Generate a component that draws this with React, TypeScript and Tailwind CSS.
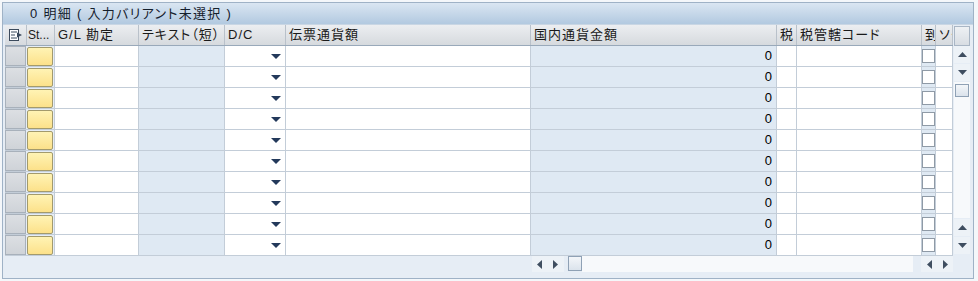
import React from 'react';

type Col = { key: string; label: string; w: string; tint?: boolean; kind?: 'sel' | 'btn' | 'dd' | 'num' | 'chk' };

const cols: Col[] = [
  { key: 'sel', label: '', w: 'w-[22px]', kind: 'sel' },
  { key: 'st', label: 'St...', w: 'w-[28px]', kind: 'btn' },
  { key: 'gl', label: 'G/L 勘定', w: 'w-[84px]' },
  { key: 'txt', label: 'テキスト（短）', w: 'w-[86px]', tint: true },
  { key: 'dc', label: 'D/C', w: 'w-[61px]', kind: 'dd' },
  { key: 'doc', label: '伝票通貨額', w: 'w-[245px]' },
  { key: 'loc', label: '国内通貨金額', w: 'w-[246px]', tint: true, kind: 'num' },
  { key: 'tax', label: '税', w: 'w-[20px]' },
  { key: 'jur', label: '税管轄コード', w: 'w-[125px]' },
  { key: 'chk', label: '到', w: 'w-[14px]', tint: true, kind: 'chk' },
  { key: 'so', label: 'ソー', w: 'w-[17px]' },
];

const rows = Array.from({ length: 10 }, (_, i) => i);

function SelIcon() {
  return (
    <svg width="14" height="12" viewBox="0 0 14 12">
      <rect x="0.5" y="0.5" width="9" height="11" fill="#fff" stroke="#3b4a5c" />
      <line x1="2" y1="3" x2="8" y2="3" stroke="#3b4a5c" />
      <line x1="2" y1="6" x2="6" y2="6" stroke="#3b4a5c" />
      <line x1="2" y1="9" x2="8" y2="9" stroke="#3b4a5c" />
      <path d="M8 3.5 L13 6 L8 8.5 Z" fill="#3b4a5c" />
    </svg>
  );
}

function Tri({ dir }: { dir: 'up' | 'down' | 'left' | 'right' }) {
  const d = {
    up: 'M0 5 L4.5 0 L9 5 Z',
    down: 'M0 0 L9 0 L4.5 5 Z',
    left: 'M5 0 L5 9 L0 4.5 Z',
    right: 'M0 0 L5 4.5 L0 9 Z',
  }[dir];
  const vert = dir === 'up' || dir === 'down';
  return (
    <svg width={vert ? 9 : 5} height={vert ? 5 : 9} viewBox={vert ? '0 0 9 5' : '0 0 5 9'}>
      <path d={d} fill="#3f4e60" />
    </svg>
  );
}

function HBtn({ dir }: { dir: 'left' | 'right' }) {
  return (
    <div className="flex items-center justify-center bg-[#edf2f7] h-[16px] w-[16px]">
      <Tri dir={dir} />
    </div>
  );
}

function VBtn({ dir }: { dir: 'up' | 'down' }) {
  return (
    <div className="flex items-center justify-center bg-[#edf2f7] h-[17px] w-[16px] mb-[1px]">
      <Tri dir={dir} />
    </div>
  );
}

function Cell({ c }: { c: Col }) {
  const base = `${c.w} shrink-0 h-full border-r border-[#c3cdd8] flex items-center`;
  if (c.kind === 'sel') {
    return (
      <div className={`${c.w} shrink-0 h-full pr-[1px] flex`}>
        <div className="w-full h-full bg-gradient-to-b from-[#dcdfe3] to-[#cfd3d8] border border-[#a8b1bb]" />
      </div>
    );
  }
  if (c.kind === 'btn') {
    return (
      <div className={`${c.w} shrink-0 h-full flex items-center pr-[1px] border-r border-[#c3cdd8]`}>
        <div className="w-full h-[19px] rounded-[2px] border border-[#a39a6c] bg-gradient-to-b from-[#fff3b4] to-[#fce18a]" />
      </div>
    );
  }
  if (c.kind === 'dd') {
    return (
      <div className={`${base} bg-white justify-end pr-[4px]`}>
        <svg width="10" height="5" viewBox="0 0 10 5">
          <path d="M0 0 L10 0 L5 5 Z" fill="#23395b" />
        </svg>
      </div>
    );
  }
  if (c.kind === 'num') {
    return <div className={`${base} bg-[#dfe9f3] justify-end pr-[4px] text-[13px] text-black`}>0</div>;
  }
  if (c.kind === 'chk') {
    return (
      <div className={`${base} bg-[#dfe9f3] justify-start`}>
        <div className="w-[13px] h-[14px] bg-white border border-[#8f9aa6]" />
      </div>
    );
  }
  return <div className={`${base} ${c.tint ? 'bg-[#dfe9f3]' : 'bg-white'}`} />;
}

export default function App() {
  return (
    <div
      className="w-[978px] h-[281px] bg-[#f4f7fa] pt-[2px] pl-[2px] text-black"
      style={{ fontFamily: '"Liberation Sans", "Noto Sans CJK JP", sans-serif', fontFeatureSettings: '"palt"' }}
    >
      <div className="w-[972px] h-[277px] border border-[#9fb2c6] bg-[#e6edf5] flex flex-col">
        {/* title bar */}
        <div className="h-[22px] shrink-0 bg-gradient-to-b from-[#dae6f2] to-[#b2c9e0] border-b border-[#c9d6e4] flex items-center pl-[27px] text-[13px] tracking-[1.3px] text-[#15202c] whitespace-pre">
          0 明細 ( 入力バリアント未選択 )
        </div>

        <div className="flex flex-1 pl-[2px]">
          {/* grid */}
          <div className="flex flex-col w-[948px]">
            <div className="flex h-[21px] border-b border-[#99a9ba]">
              {cols.map((c) =>
                c.kind === 'sel' ? (
                  <div key={c.key} className={`${c.w} shrink-0 flex items-center justify-center bg-gradient-to-b from-[#eceef1] to-[#d6dade] border-r border-[#b9c1ca]`}>
                    <SelIcon />
                  </div>
                ) : c.kind === 'btn' ? (
                  <div
                    key={c.key}
                    className={`${c.w} shrink-0 overflow-hidden whitespace-nowrap flex items-center pl-[1px] text-[12px] tracking-[0px] bg-gradient-to-b from-[#eceef1] to-[#d6dade] border-r border-[#b9c1ca] text-[#1a1a1a]`}
                  >
                    {c.label}
                  </div>
                ) : (
                  <div
                    key={c.key}
                    className={`${c.w} shrink-0 overflow-hidden whitespace-nowrap flex items-center pl-[3px] text-[13px] tracking-[1px] bg-gradient-to-b from-[#eceef1] to-[#d6dade] border-r border-[#b9c1ca] text-[#1a1a1a]`}
                  >
                    {c.label}
                  </div>
                )
              )}
            </div>
            {rows.map((r) => (
              <div key={r} className="flex h-[21px] border-b border-[#c3cdd8]">
                {cols.map((c) => (
                  <Cell key={c.key} c={c} />
                ))}
              </div>
            ))}
            {/* horizontal scrollbar */}
            <div className="flex h-[16px]">
              <div className="w-[527px] shrink-0" />
              <HBtn dir="left" />
              <HBtn dir="right" />
              <div className="w-[4px]" />
              <div className="w-[14px] h-[15px] border border-[#8fa1b5] bg-gradient-to-b from-[#f3f6f9] to-[#dbe3ec]" />
              <div className="w-[332px] h-[16px] bg-[#f7f9fb]" />
              <div className="w-[8px]" />
              <HBtn dir="left" />
              <HBtn dir="right" />
            </div>
          </div>

          {/* vertical scrollbar */}
          <div className="flex flex-col pl-[1px] w-[20px]">
            <div className="h-[21px] flex items-center">
              <div className="w-[16px] h-[20px] border border-[#a9b6c5] bg-gradient-to-b from-[#eef1f4] to-[#d8dde3]" />
            </div>
            <VBtn dir="up" />
            <VBtn dir="down" />
            <div className="bg-[#f7f9fb] w-[16px] h-[136px] pt-[2px] flex flex-col items-center mb-[1px]">
              <div className="w-[14px] h-[13px] border border-[#8fa1b5] bg-gradient-to-b from-[#f3f6f9] to-[#dbe3ec]" />
            </div>
            <VBtn dir="up" />
            <VBtn dir="down" />
          </div>
        </div>
      </div>
    </div>
  );
}
